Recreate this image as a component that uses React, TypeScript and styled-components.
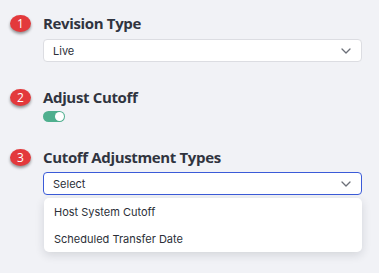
import styled, { createGlobalStyle } from 'styled-components';

const GlobalStyle = createGlobalStyle`
  html, body {
    margin: 0;
    padding: 0;
    background: #f1f2f6;
  }
  body {
    font-family: Inter, "Noto Sans", sans-serif;
  }
`;

const Page = styled.div`
  width: 379px;
  height: 273px;
  box-sizing: border-box;
  padding: 13px 17px 0 10px;
  display: flex;
  flex-direction: column;
  gap: 25px;
`;

const Section = styled.div`
  display: grid;
  grid-template-columns: 21px 1fr;
  column-gap: 12px;
`;

const Badge = styled.div`
  width: 21px;
  height: 17px;
  margin-top: 2px;
  border-radius: 50%;
  background: #e3393c;
  color: #fff;
  font-family: "Open Sans", sans-serif;
  font-size: 12px;
  line-height: 17px;
  text-align: center;
  box-shadow: 0 2px 3px rgba(0, 0, 0, 0.4);
`;

const Body = styled.div<{ $gap: number }>`
  display: flex;
  flex-direction: column;
  gap: ${(p) => p.$gap}px;
`;

const Heading = styled.div`
  font-family: "Open Sans", sans-serif;
  font-weight: 700;
  font-size: 15px;
  line-height: 20px;
  color: #30343f;
  letter-spacing: -0.35px;
`;

const SelectWrap = styled.div`
  position: relative;
`;

const SelectBox = styled.div<{ $open?: boolean }>`
  height: 23px;
  box-sizing: border-box;
  border: 1px solid ${(p) => (p.$open ? '#3b5bd8' : '#dcdde2')};
  border-radius: 4px;
  background: #fff;
  display: flex;
  align-items: center;
  justify-content: space-between;
  padding: 0 10px 0 9px;
  font-size: 11px;
  color: #2b2f38;
`;

const Chevron = () => (
  <svg width="10" height="6" viewBox="0 0 10 6" fill="none">
    <path d="M1 1l4 4 4-4" stroke="#6b6f78" strokeWidth="1.3" strokeLinecap="round" strokeLinejoin="round" />
  </svg>
);

const Menu = styled.div`
  position: absolute;
  top: 26px;
  left: 1px;
  right: 0;
  background: #fff;
  border-radius: 5px;
  box-shadow: 0 3px 10px rgba(30, 35, 50, 0.14);
`;

const MenuItem = styled.div`
  height: 27px;
  display: flex;
  align-items: center;
  padding-left: 10px;
  font-size: 11px;
  color: #2b2f38;
`;

const Toggle = styled.div<{ $on: boolean }>`
  width: 22px;
  height: 11px;
  border-radius: 6px;
  background: ${(p) => (p.$on ? '#4faf8e' : '#c9ccd3')};
  position: relative;
  &::after {
    content: '';
    position: absolute;
    top: 1px;
    left: ${(p) => (p.$on ? '12px' : '1px')};
    width: 9px;
    height: 9px;
    border-radius: 50%;
    background: #fff;
  }
`;

export default function App() {
  return (
    <>
      <GlobalStyle />
      <Page>
        <Section>
          <Badge>1</Badge>
          <Body $gap={6}>
            <Heading>Revision Type</Heading>
            <SelectBox>
              <span>Live</span>
              <Chevron />
            </SelectBox>
          </Body>
        </Section>
        <Section>
          <Badge>2</Badge>
          <Body $gap={4}>
            <Heading>Adjust Cutoff</Heading>
            <Toggle $on />
          </Body>
        </Section>
        <Section>
          <Badge>3</Badge>
          <Body $gap={5}>
            <Heading>Cutoff Adjustment Types</Heading>
            <SelectWrap>
              <SelectBox $open>
                <span>Select</span>
                <Chevron />
              </SelectBox>
              <Menu>
                <MenuItem>Host System Cutoff</MenuItem>
                <MenuItem>Scheduled Transfer Date</MenuItem>
              </Menu>
            </SelectWrap>
          </Body>
        </Section>
      </Page>
    </>
  );
}
